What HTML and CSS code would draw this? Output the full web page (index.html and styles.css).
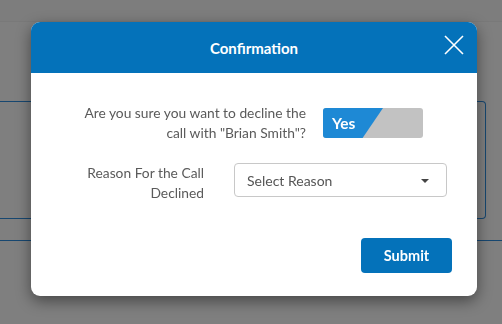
FILE: index.html
```html
<!DOCTYPE html>
<html>
<head>
<meta charset="utf-8">
<link rel="stylesheet" href="styles.css">
</head>
<body>
<div class="page">
  <div class="topbar"></div>
  <div class="card"></div>
  <div class="divider"></div>
</div>
<div class="overlay"></div>
<div class="modal">
  <div class="modal-header">
    <h2 class="modal-title">Confirmation</h2>
    <button class="close" aria-label="Close">
      <svg width="20" height="20" viewBox="0 0 20 20"><path d="M1 1 L19 19 M19 1 L1 19" stroke="#fff" stroke-width="1.6" fill="none"/></svg>
    </button>
  </div>
  <div class="modal-body">
    <div class="row row-confirm">
      <div class="label label-confirm">Are you sure you want to decline the call with "Brian Smith"?</div>
      <div class="toggle">
        <div class="toggle-on"></div>
        <span class="toggle-text">Yes</span>
      </div>
    </div>
    <div class="row row-reason">
      <div class="label label-reason">Reason For the Call Declined</div>
      <div class="select">
        <span>Select Reason</span>
        <span class="caret"></span>
      </div>
    </div>
    <div class="actions">
      <button class="submit">Submit</button>
    </div>
  </div>
</div>
</body>
</html>
```
FILE: styles.css
```css
* { box-sizing: border-box; }
html, body { margin: 0; padding: 0; }
body {
  width: 502px;
  height: 324px;
  overflow: hidden;
  background: #ffffff;
  font-family: Lato, "Open Sans", sans-serif;
}
.page { height: 324px; }
.topbar {
  height: 22px;
  background: #fafafa;
  border-bottom: 1px solid #f2f2f2;
}
.card {
  margin-top: 79px;
  width: 486px;
  height: 118px;
  border: 1px solid #2f8ee0;
  border-left: none;
  border-radius: 0 4px 4px 0;
}
.divider {
  margin-top: 21px;
  height: 1px;
  background: #2f8ee0;
}
.overlay {
  position: fixed;
  inset: 0;
  background: rgba(0, 0, 0, 0.5);
}
.modal {
  position: absolute;
  left: 31px;
  top: 22px;
  width: 446px;
  height: 274px;
  background: #fff;
  border-radius: 9px;
  overflow: hidden;
  box-shadow: 0 5px 15px rgba(0, 0, 0, 0.45);
}
.modal-header {
  height: 51px;
  background: #0472ba;
  display: flex;
  align-items: center;
  justify-content: center;
  position: relative;
}
.modal-title {
  margin: 0;
  color: #fff;
  font-size: 15px;
  font-weight: 700;
}
.close {
  position: absolute;
  right: 13px;
  top: 13px;
  width: 20px;
  height: 20px;
  padding: 0;
  border: none;
  background: transparent;
  display: block;
}
.close svg { display: block; }
.modal-body {
  padding: 30px 25px 23px 0;
}
.row {
  display: flex;
}
.row-confirm {
  align-items: center;
  gap: 17px;
}
.row-reason {
  margin-top: 20px;
  align-items: flex-start;
  gap: 30px;
}
.label {
  color: #5a5a5a;
  font-size: 13.8px;
  line-height: 20px;
  text-align: right;
}
.label-confirm { width: 275px; padding-left: 50px; }
.label-reason { width: 173px; padding-left: 50px; }
.toggle {
  position: relative;
  width: 100px;
  height: 30px;
  border-radius: 3px;
  background: #c2c2c2;
  overflow: hidden;
}
.toggle-on {
  width: 60px;
  height: 30px;
  background: #1e89d5;
  clip-path: polygon(0 0, 100% 0, 66% 100%, 0 100%);
}
.toggle-text {
  position: absolute;
  left: 9px;
  top: 6px;
  color: #fff;
  font-weight: 700;
  font-size: 15.5px;
  line-height: 18px;
}
.select {
  width: 213px;
  height: 34px;
  border: 1px solid #c8c8c8;
  border-radius: 4px;
  display: flex;
  align-items: center;
  justify-content: space-between;
  padding: 0 17px 0 12px;
  color: #555;
  font-size: 14px;
}
.caret {
  width: 0;
  height: 0;
  border-left: 4px solid transparent;
  border-right: 4px solid transparent;
  border-top: 4px solid #444;
  margin-top: 1px;
}
.actions {
  margin-top: 35px;
  display: flex;
  justify-content: flex-end;
}
.submit {
  width: 91px;
  height: 35px;
  border: none;
  border-radius: 4px;
  background: #0472ba;
  color: #fff;
  font-family: Lato, "Open Sans", sans-serif;
  font-weight: 700;
  font-size: 14.5px;
  padding: 0;
}
```
